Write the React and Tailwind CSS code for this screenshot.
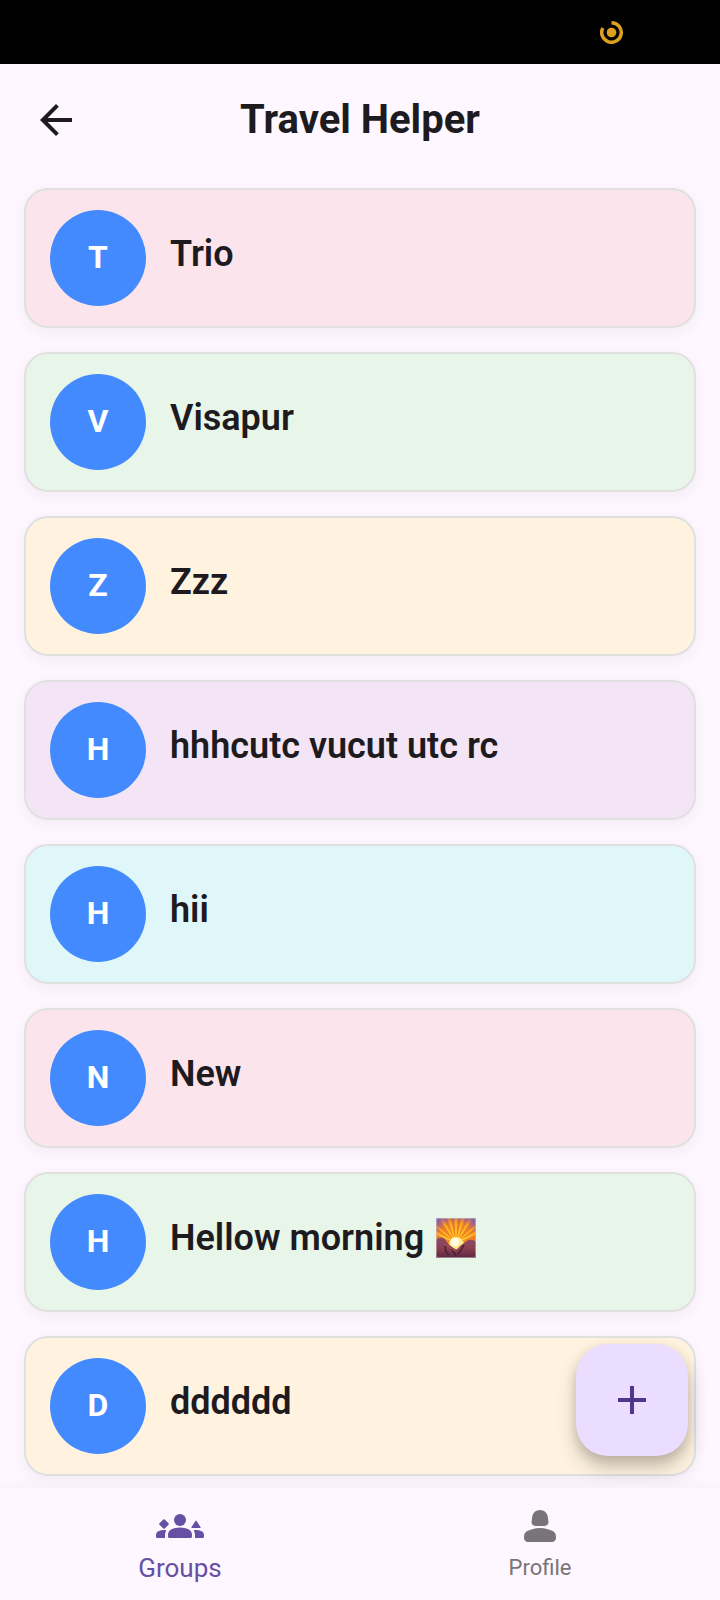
import React from "react";

const groups = [
  { name: "Trio", color: "bg-[#fce4ec]" },
  { name: "Visapur", color: "bg-[#e8f5e9]" },
  { name: "Zzz", color: "bg-[#fff3e0]" },
  { name: "hhhcutc vucut utc rc", color: "bg-[#f3e5f5]" },
  { name: "hii", color: "bg-[#e0f7fa]" },
  { name: "New", color: "bg-[#fce4ec]" },
  { name: "Hellow morning", color: "bg-[#e8f5e9]", sunrise: true },
  { name: "dddddd", color: "bg-[#fff3e0]" },
];

function RecordIcon() {
  return (
    <svg viewBox="0 0 24 24" className="size-6" aria-hidden="true">
      <circle cx="11.5" cy="12.5" r="4.8" fill="#dd9f20" />
      <path d="M11.5 2.7A9.8 9.8 0 1 1 2.8 8" fill="none" stroke="#dd9f20" strokeWidth="3.5" />
    </svg>
  );
}

function BackIcon() {
  return (
    <svg viewBox="0 0 24 24" className="size-12" fill="currentColor" aria-hidden="true">
      <path d="M20 11H7.83l5.59-5.59L12 4l-8 8 8 8 1.41-1.41L7.83 13H20v-2z" />
    </svg>
  );
}

function GroupsIcon() {
  return (
    <svg viewBox="0 0 24 24" className="size-12" fill="currentColor" aria-hidden="true">
      <circle cx="12" cy="9" r="3" />
      <path d="M12 12.75c1.63 0 3.07.39 4.24.9 1.08.48 1.76 1.56 1.76 2.73V17.4c0 .33-.27.6-.6.6H6.6c-.33 0-.6-.27-.6-.6v-1.01c0-1.18.68-2.26 1.76-2.73 1.17-.52 2.61-.91 4.24-.91z" />
      <path d="M5.13 14.1C4.76 14.04 4.39 14 4 14c-.99 0-1.93.21-2.78.58C.48 14.9 0 15.62 0 16.43V17.4c0 .33.27.6.6.6h3.9v-1.61c0-.83.23-1.61.63-2.29z" />
      <path d="M18.87 14.1c.37-.06.74-.1 1.13-.1.99 0 1.93.21 2.78.58.74.32 1.22 1.04 1.22 1.85V17.4c0 .33-.27.6-.6.6h-3.9v-1.61c0-.83-.23-1.61-.63-2.29z" />
      <path d="M3.65 8.75a.5.5 0 0 1 .7 0l1.9 1.9a.5.5 0 0 1 0 .7l-1.9 1.9a.5.5 0 0 1-.7 0l-1.9-1.9a.5.5 0 0 1 0-.7z" />
      <path d="M19.8 9.4a.24.24 0 0 1 .4 0l2.1 3.2a.26.26 0 0 1-.22.4h-4.16a.26.26 0 0 1-.22-.4z" />
    </svg>
  );
}

function ProfileIcon() {
  return (
    <svg viewBox="0 0 24 24" className="size-12" fill="currentColor" aria-hidden="true">
      <path d="M18.39 14.56C16.71 13.7 14.53 13 12 13s-4.71.7-6.39 1.56C4.61 15.07 4 16.1 4 17.22V18c0 1.1.9 2 2 2h12c1.1 0 2-.9 2-2v-.78c0-1.12-.61-2.15-1.61-2.66z" />
      <path d="M9.78 12h4.44c1.21 0 2.14-1.06 1.98-2.26l-.32-2.45C15.57 5.39 13.92 4 12 4S8.43 5.39 8.12 7.29L7.8 9.74C7.64 10.94 8.57 12 9.78 12z" />
    </svg>
  );
}

function SunriseIcon() {
  return (
    <svg viewBox="0 0 40 40" className="size-10" role="img" aria-label="Sunrise over mountains">
      <defs>
        <radialGradient id="sky" gradientUnits="userSpaceOnUse" cx="20" cy="25" r="32">
          <stop offset="0.3" stopColor="#f58a1a" />
          <stop offset="0.6" stopColor="#ea7b2c" />
          <stop offset="0.8" stopColor="#a8647f" />
          <stop offset="1" stopColor="#6a5cc0" />
        </radialGradient>
        <radialGradient id="rays" gradientUnits="userSpaceOnUse" cx="20" cy="25" r="27">
          <stop offset="0.3" stopColor="#ffd035" />
          <stop offset="0.75" stopColor="#fda81c" />
          <stop offset="1" stopColor="#e8933f" stopOpacity="0.2" />
        </radialGradient>
        <linearGradient id="peak" gradientUnits="userSpaceOnUse" x1="0" y1="20" x2="0" y2="40">
          <stop offset="0" stopColor="#8a4c6a" />
          <stop offset="0.5" stopColor="#8c3f50" />
          <stop offset="1" stopColor="#5a2842" />
        </linearGradient>
        <clipPath id="frame">
          <rect width="40" height="40" rx="2" />
        </clipPath>
      </defs>
      <g clipPath="url(#frame)">
        <rect width="40" height="40" fill="url(#sky)" />
        <g fill="url(#rays)">
          <path d="M20 25 18.400 0h3.200z" />
          <path d="M20 25 11 0h3.600z" />
          <path d="M20 25 25.400 0H29z" />
          <path d="M20 25 3.600 1.400 7 0z" />
          <path d="M20 25 33 0l3.400 1.400z" />
          <path d="M20 25 0 6v3.600z" />
          <path d="M20 25 40 6v3.600z" />
          <path d="M20 25 0 13v4z" />
          <path d="M20 25 40 13v4z" />
        </g>
        <circle cx="20.5" cy="26.5" r="7.5" fill="#ffe784" />
        <circle cx="19" cy="24" r="4.5" fill="#fffbe0" />
        <path d="M0 22c2-2.500 5.500-3.500 8-1.500 2.200 1.800 3.500 5 6 7 2 1.500 4 3 6.500 4 2-1 3-3.500 5.500-5 2-1.500 4.500-4 7-4.500 2.500-.5 5 0 7 2V40H0z" fill="url(#peak)" />
        <path d="M9 28c0 4 1 7 4 9m3-6c1 3 3 4 4 7m8-11c-2 4-3 6-6 9" fill="none" stroke="#481d33" strokeWidth="1.500" />
        <path d="M8 26c3 1 7 5 12.500 7.500" fill="none" stroke="#ab5558" strokeWidth="1" />
      </g>
      <rect x="0.5" y="0.5" width="39" height="39" rx="2" fill="none" stroke="#d6cdd6" strokeOpacity="0.5" />
    </svg>
  );
}

function GroupCard({ group }) {
  return (
    <li>
      <a
        href="#"
        className={`flex gap-6 rounded-3xl border-2 border-[#e0e0e0] px-6 py-5 shadow-[0_4px_16px_rgba(0,0,0,0.05)] ${group.color}`}
      >
        <span className="flex size-24 shrink-0 items-center justify-center rounded-full bg-[#448aff] pb-0.5 text-[32px] font-bold leading-10 text-white">
          {group.name[0].toUpperCase()}
        </span>
        <span className="flex items-center gap-3 self-center pb-2 text-4xl font-semibold">
          {group.name}
          {group.sunrise && <SunriseIcon />}
        </span>
      </a>
    </li>
  );
}

export default function App() {
  return (
    <div className="flex min-h-screen flex-col bg-[#fef7ff] font-[Roboto,sans-serif] text-[#1d1b20]">
      <div className="flex h-16 items-center justify-end bg-black pr-24">
        <RecordIcon />
      </div>
      <header className="grid h-28 grid-cols-[48px_1fr_48px] items-center px-8">
        <button type="button" aria-label="Back">
          <BackIcon />
        </button>
        <h1 className="text-center text-[40px] font-bold leading-12">Travel Helper</h1>
      </header>
      <main className="flex-1 px-6 py-3">
        <ul className="flex flex-col gap-6">
          {groups.map((group) => (
            <GroupCard key={group.name} group={group} />
          ))}
        </ul>
      </main>
      <div className="sticky bottom-0">
        <button
          type="button"
          aria-label="Add group"
          className="absolute right-8 bottom-36 flex size-28 items-center justify-center rounded-4xl bg-[#eaddff] text-[#4f378b] shadow-[0_12px_20px_rgba(0,0,0,0.2),0_4px_12px_rgba(0,0,0,0.12)]"
        >
          <svg viewBox="0 0 24 24" className="size-12" fill="currentColor" aria-hidden="true">
            <path d="M19 13h-6v6h-2v-6H5v-2h6V5h2v6h6v2z" />
          </svg>
        </button>
        <nav className="grid h-28 grid-cols-2 bg-[#fef7ff] shadow-[0_0_16px_rgba(0,0,0,0.04)]">
          <a href="#" aria-current="page" className="flex flex-col items-center pt-3.5 text-[#6750a4]">
            <GroupsIcon />
            <span className="text-[26px] leading-9">Groups</span>
          </a>
          <a href="#" className="flex flex-col items-center pt-3.5 text-[#787478]">
            <ProfileIcon />
            <span className="text-[22px] leading-9">Profile</span>
          </a>
        </nav>
      </div>
    </div>
  );
}
